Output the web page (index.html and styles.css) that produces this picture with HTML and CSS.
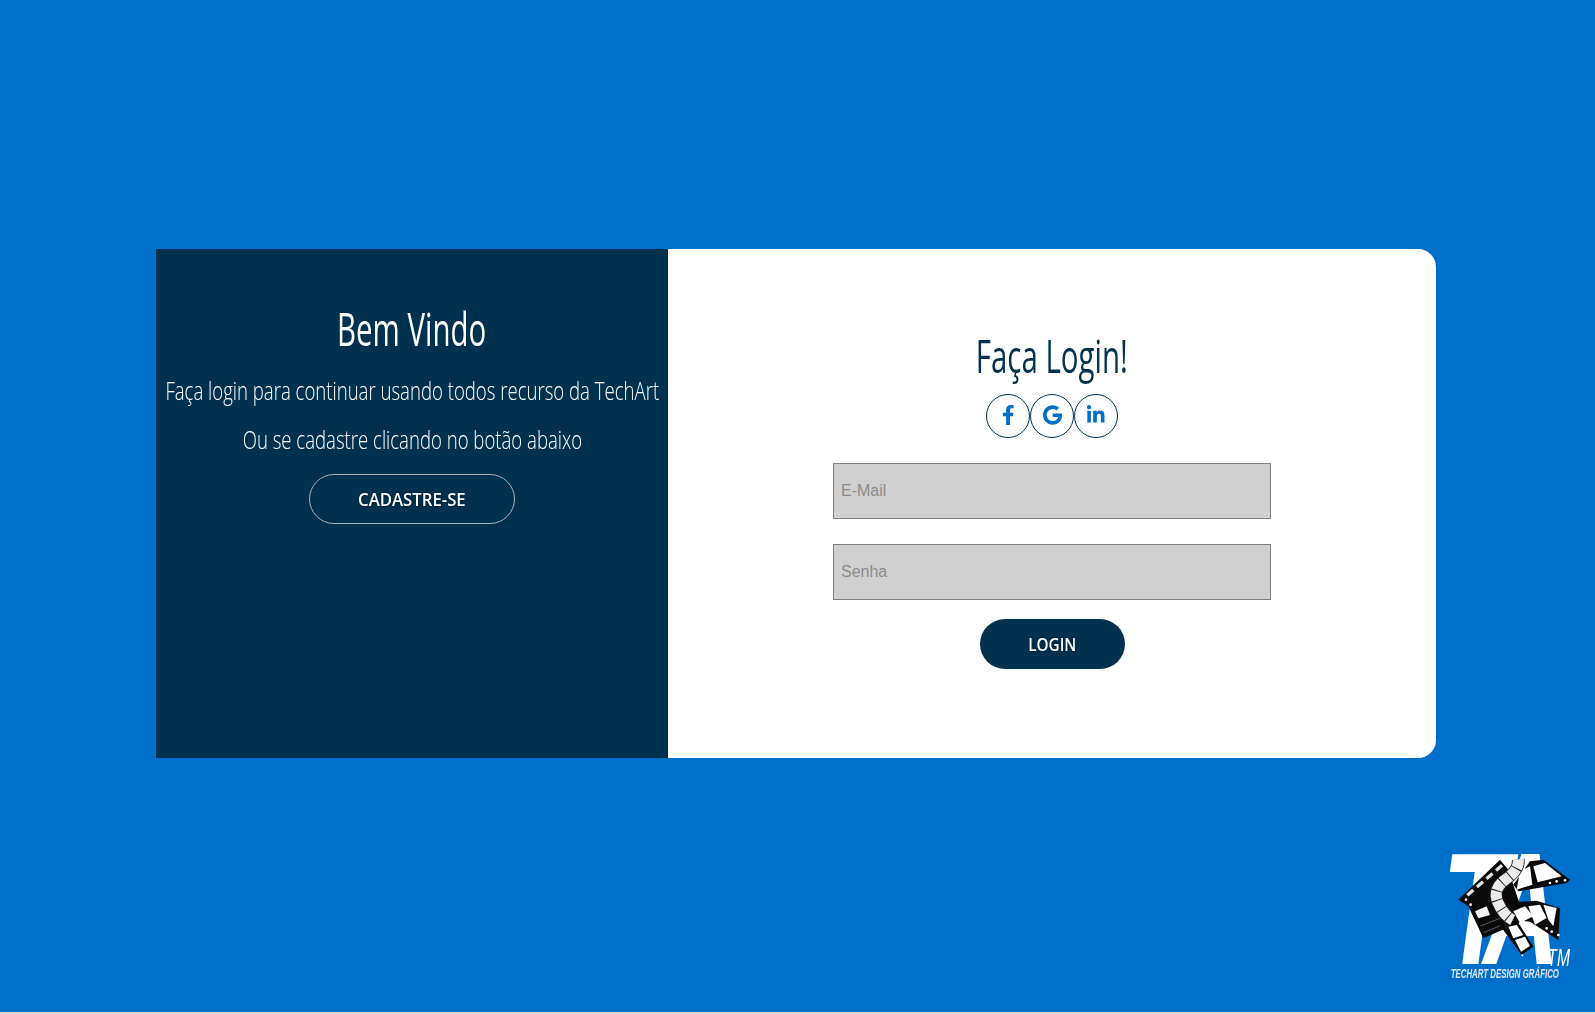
FILE: index.html
```html
<!DOCTYPE html>
<html lang="pt-BR">
<head>
  <meta charset="UTF-8" />
  <meta name="viewport" content="width=device-width, initial-scale=1.0"/>
  <title>TechArt - Login</title>
  <link rel="stylesheet" href="styles.css">
</head>
<body>

<main class="card">
  <section class="welcome">
    <h1 class="welcome-title"><span class="squeeze">Bem Vindo</span></h1>
    <p class="welcome-text"><span class="squeeze">Faça login para continuar usando todos recurso da TechArt</span></p>
    <p class="welcome-text"><span class="squeeze">Ou se cadastre clicando no botão abaixo</span></p>
    <a class="btn btn-outline" href="#"><span class="squeeze">CADASTRE-SE</span></a>
  </section>

  <section class="login">
    <h2 class="login-title"><span class="squeeze">Faça Login!</span></h2>
    <div class="socials">
      <a class="social" href="#" aria-label="Facebook">
        <svg viewBox="0 0 320 512" width="12.5" height="20"><path d="M279.14 288l14.22-92.66h-88.91v-60.13c0-25.35 12.42-50.06 52.24-50.06h40.42V6.26S260.43 0 225.36 0c-73.22 0-121.08 44.38-121.08 124.72v70.62H22.89V288h81.39v224h100.17V288z"/></svg>
      </a>
      <a class="social" href="#" aria-label="Google">
        <svg viewBox="0 0 488 512" width="19" height="20"><path d="M488 261.8C488 403.3 391.1 504 248 504 110.8 504 0 393.2 0 256S110.8 8 248 8c66.8 0 123 24.5 166.3 64.9l-67.5 64.9C258.5 52.6 94.3 116.6 94.3 256c0 86.5 69.1 156.6 153.7 156.6 98.2 0 135-70.4 140.8-106.9H248v-85.3h236.1c2.3 12.7 3.9 24.9 3.9 41.4z"/></svg>
      </a>
      <a class="social" href="#" aria-label="LinkedIn">
        <svg viewBox="0 0 448 512" width="17.5" height="20"><path d="M100.28 448H7.4V148.9h92.88zM53.79 111.1C24.09 111.1 0 86.5 0 56.8a53.79 53.79 0 0 1 107.58 0c0 29.7-24.1 54.3-53.79 54.3zM447.9 448h-92.68V302.4c0-34.7-.7-79.2-48.29-79.2-48.29 0-55.69 37.7-55.69 76.7V448h-92.78V148.9h89.08v40.8h1.3c12.4-23.5 42.69-48.3 87.88-48.3 94 0 111.28 61.9 111.28 142.3V448z"/></svg>
      </a>
    </div>
    <input class="field" type="email" placeholder="E-Mail">
    <input class="field" type="password" placeholder="Senha">
    <a class="btn btn-solid" href="#"><span class="squeeze">LOGIN</span></a>
  </section>
</main>

<!-- logo drawn on the same grid as the crop, 3 units per pixel -->
<svg class="brand" viewBox="0 0 495 519" width="165" height="173" role="img" aria-label="TechArt Design Gráfico">
  <text class="brand-ta" x="36" y="372" textLength="205" lengthAdjust="spacingAndGlyphs">T</text>
  <text class="brand-ta" x="160" y="372" textLength="228" lengthAdjust="spacingAndGlyphs">A</text>

  <!-- clapper board -->
  <polygon points="85,179 210,59 235,89 285,240 160,295 115,199" fill="#0a0a0a"/>
  <path d="M112,166 L218,74" stroke="#e4e4e4" stroke-width="10" stroke-dasharray="24 14" fill="none"/>
  <polygon points="135,214 170,199 180,225 145,235" fill="#f2f2f2"/>
  <path d="M152,258 L262,214 M160,278 L272,232" stroke="#5a5a5a" stroke-width="3" fill="none"/>
  <g fill="#fff">
    <circle cx="108" cy="179" r="4"/>
    <circle cx="122" cy="194" r="4"/>
  </g>

  <!-- film strips -->
  <polygon points="250,134 300,64 340,59 420,119 410,129 265,154" fill="#0a0a0a"/>
  <polygon points="270,94 300,79 307,134 260,149" fill="#fff"/>
  <polygon points="310,79 345,69 395,109 323,127" fill="#fff"/>
  <polygon points="215,190 320,182 390,205 385,300 300,245 215,235" fill="#0a0a0a"/>
  <polygon points="250,214 285,199 310,229 270,249" fill="#fff"/>
  <polygon points="295,199 330,194 350,234 315,254" fill="#fff"/>
  <polygon points="340,194 380,204 370,259 355,239" fill="#fff"/>
  <polygon points="205,250 260,240 310,320 275,345" fill="#0a0a0a"/>
  <polygon points="235,260 260,255 280,285 250,295" fill="#fff"/>
  <polygon points="255,300 285,290 300,318 273,335" fill="#fff"/>
  <g fill="#fff">
    <circle cx="360" cy="129" r="4"/>
    <circle cx="380" cy="124" r="4"/>
    <circle cx="405" cy="121" r="4"/>
    <circle cx="350" cy="265" r="4"/>
    <circle cx="365" cy="275" r="4"/>
    <circle cx="385" cy="285" r="4"/>
    <circle cx="277" cy="346" r="3"/>
  </g>

  <!-- curled strip in the middle -->
  <path d="M265,58 C268,90 240,108 222,122 C198,140 192,165 205,190 C214,210 228,230 248,240" stroke="#222" stroke-width="38" fill="none"/>
  <path d="M265,58 C268,90 240,108 222,122 C198,140 192,165 205,190 C214,210 228,230 248,240" stroke="#ebebeb" stroke-width="33" stroke-dasharray="27 3" fill="none"/>

  <text class="brand-tm" x="352" y="378" textLength="68" lengthAdjust="spacingAndGlyphs">TM</text>
  <text class="brand-name" x="62" y="415" textLength="325" lengthAdjust="spacingAndGlyphs">TECHART DESIGN GRÁFICO</text>
</svg>

</body>
</html>
```

FILE: styles.css
```css
html {
  background: #d8d8d8;
}
body {
  position: relative;
  box-sizing: border-box;
  height: 1012px;
  margin: 0;
  padding: 249px 0 0 156px;
  background: #006fca;
  font-family: "Open Sans", "Liberation Sans", sans-serif;
}

.card {
  display: flex;
  width: 1280px;
  height: 509px;
  background: #fff;
  border-radius: 0 18px 18px 0;
  overflow: hidden;
}

.squeeze {
  display: inline-block;
  white-space: nowrap;
}
.welcome-title .squeeze { transform: scaleX(0.64); }
.welcome-text .squeeze { transform: scaleX(0.743); }
.login-title .squeeze { transform: scaleX(0.64); }
.btn-outline .squeeze { transform: scaleX(0.93); }
.btn-solid .squeeze { transform: scaleX(0.85); }

.welcome {
  display: flex;
  flex-direction: column;
  align-items: center;
  width: 512px;
  padding-top: 52px;
  box-sizing: border-box;
  background: #003250;
  color: #fff;
}
.welcome-title {
  margin: 0 0 11px;
  font-size: 46px;
  line-height: 54px;
  font-weight: 400;
}
.welcome-text {
  margin: 0 -40px;
  font-size: 25px;
  line-height: 30px;
  font-weight: 300;
  padding-top: 9px;
  padding-bottom: 10px;
}

.btn {
  display: flex;
  align-items: center;
  justify-content: center;
  box-sizing: border-box;
  height: 50px;
  border-radius: 25px;
  color: #fff;
  font-size: 18px;
  font-weight: 600;
  text-decoration: none;
  text-shadow: 0 0 4px rgba(0, 0, 0, 0.5);
}
.btn-outline {
  width: 206px;
  margin-top: 10px;
  border: 1px solid #a9b4bc;
}
.btn-solid {
  width: 145px;
  background: #003250;
}

.login {
  display: flex;
  flex-direction: column;
  align-items: center;
  flex: 1;
  padding-top: 79px;
}
.login-title {
  margin: 0;
  font-size: 46px;
  line-height: 54px;
  font-weight: 400;
  color: #003250;
}
.socials {
  display: flex;
  margin: 12px 0 25px;
}
.social {
  display: flex;
  align-items: center;
  justify-content: center;
  box-sizing: border-box;
  width: 44px;
  height: 44px;
  border: 1px solid #003250;
  border-radius: 50%;
  fill: #006fca;
}
.social svg {
  display: block;
  margin-bottom: 2px;
}
.field {
  display: block;
  box-sizing: border-box;
  width: 438px;
  height: 56px;
  margin: 0 0 25px;
  padding: 0 7px;
  border: 1px solid #808080;
  border-radius: 0;
  background: #d0d0d0;
  font-family: "Liberation Sans", Arial, sans-serif;
  font-size: 16px;
}
.field::placeholder {
  color: #8c8c8c;
  opacity: 1;
}
.field + .btn-solid {
  margin-top: -6px;
}

.brand {
  position: absolute;
  left: 1430px;
  top: 840px;
  filter: blur(0.4px);
}
.brand-ta {
  font-family: "Liberation Sans", sans-serif;
  font-size: 480px;
  font-weight: 700;
  font-style: italic;
  fill: #fff;
}
.brand-tm {
  font-family: "Liberation Sans", sans-serif;
  font-size: 72px;
  font-style: italic;
  fill: #fff;
}
.brand-name {
  font-family: "Liberation Sans", sans-serif;
  font-size: 41px;
  font-weight: 700;
  font-style: italic;
  fill: #dfe9f5;
}
```
